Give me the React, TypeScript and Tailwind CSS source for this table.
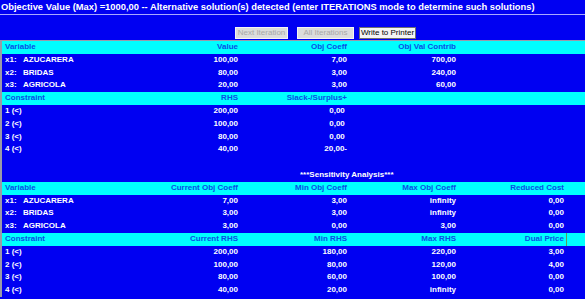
import React from "react";

const font = { fontFamily: '"Liberation Sans", Arial, sans-serif' };

type Row = { kind: "head" | "body" | "blank" | "title"; cells?: string[]; focus?: boolean };

const rows: Row[] = [
  { kind: "head", cells: ["Variable", "Value", "Obj Coeff", "Obj Val Contrib", ""] },
  { kind: "body", cells: ["x1:|AZUCARERA", "100,00", "7,00", "700,00", ""] },
  { kind: "body", cells: ["x2:|BRIDAS", "80,00", "3,00", "240,00", ""] },
  { kind: "body", cells: ["x3:|AGRICOLA", "20,00", "3,00", "60,00", ""] },
  { kind: "head", cells: ["Constraint", "RHS", "Slack-/Surplus+", "", ""] },
  { kind: "body", cells: ["1 (<)", "200,00", "0,00\u00a0", "", ""] },
  { kind: "body", cells: ["2 (<)", "100,00", "0,00\u00a0", "", ""] },
  { kind: "body", cells: ["3 (<)", "80,00", "0,00\u00a0", "", ""] },
  { kind: "body", cells: ["4 (<)", "40,00", "20,00-", "", ""] },
  { kind: "blank" },
  { kind: "title" },
  { kind: "head", cells: ["Variable", "Current Obj Coeff", "Min Obj Coeff", "Max Obj Coeff", "Reduced Cost"] },
  { kind: "body", cells: ["x1:|AZUCARERA", "7,00", "3,00", "infinity", "0,00"] },
  { kind: "body", cells: ["x2:|BRIDAS", "3,00", "3,00", "infinity", "0,00"] },
  { kind: "body", cells: ["x3:|AGRICOLA", "3,00", "0,00", "3,00", "0,00"] },
  { kind: "head", cells: ["Constraint", "Current RHS", "Min RHS", "Max RHS", "Dual Price"], focus: true },
  { kind: "body", cells: ["1 (<)", "200,00", "180,00", "220,00", "3,00"] },
  { kind: "body", cells: ["2 (<)", "100,00", "80,00", "120,00", "4,00"] },
  { kind: "body", cells: ["3 (<)", "80,00", "60,00", "100,00", "0,00"] },
  { kind: "body", cells: ["4 (<)", "40,00", "20,00", "infinity", "0,00"] },
];

function Label({ text }: { text: string }) {
  if (text.includes("|")) {
    const [a, b] = text.split("|");
    return (
      <span>
        <span className="inline-block w-[18px]">{a}</span>
        {b}
      </span>
    );
  }
  return <span>{text}</span>;
}

export default function App() {
  return (
    <div className="w-[585px] h-[299px] overflow-hidden bg-[#0000f2] text-white font-bold" style={font}>
      <div className="h-[15px] border-b border-[#a8a8ff] text-[9.35px] leading-[14px] pl-[1px] whitespace-nowrap">
        Objective Value (Max) =1000,00 -- Alternative solution(s) detected (enter ITERATIONS mode to determine such solutions)
      </div>
      <div className="h-[25px] flex items-start pt-[12px] font-normal text-[8px]">
        <button className="ml-[235px] w-[53px] h-[12px] bg-[#dcdcdc] border border-[#f4f4f4] text-[#a8a8a8] leading-[10px]">
          Next Iteration
        </button>
        <button className="ml-[9px] w-[57px] h-[12px] bg-[#dcdcdc] border border-[#f4f4f4] text-[#a8a8a8] leading-[10px]">
          All Iterations
        </button>
        <button className="ml-[5px] w-[57px] h-[12px] bg-[#f4f4f4] border border-[#707070] text-black leading-[10px]">
          Write to Printer
        </button>
      </div>
      <div className="border-l-2 border-t border-[#9a9aa8] text-[8px]">
        {rows.map((r, i) => {
          if (r.kind === "blank") return <div key={i} className="h-[12.8px]" />;
          if (r.kind === "title")
            return (
              <div key={i} className="h-[12.8px] leading-[12.8px] pl-[298px]">
                ***Sensitivity Analysis***
              </div>
            );
          const head = r.kind === "head";
          return (
            <div
              key={i}
              className={
                "grid grid-cols-[118px_120px_109px_109px_108px_1fr] h-[12.8px] leading-[12.8px] whitespace-nowrap " +
                (head ? "bg-[#00ffff] text-[#0a4fe6]" : "")
              }
            >
              <div className="pl-[3px]">
                <Label text={r.cells![0]} />
              </div>
              {r.cells!.slice(1).map((c, j) => (
                <div key={j} className="text-right pr-[2px]">
                  {c}
                </div>
              ))}
              <div className={r.focus ? "border-l border-[#5c9c5c]" : ""} />
            </div>
          );
        })}
      </div>
    </div>
  );
}
